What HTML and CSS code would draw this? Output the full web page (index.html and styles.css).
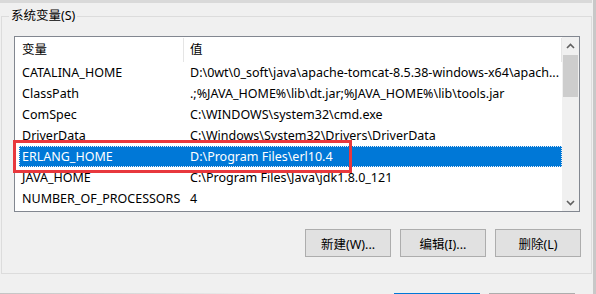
FILE: index.html
```html
<!DOCTYPE html>
<html lang="zh-CN">
<head>
<meta charset="utf-8">
<title>系统变量</title>
<link rel="stylesheet" href="styles.css">
</head>
<body>
<div class="window">
  <div class="topband"></div>
  <div class="group">
    <div class="group-label">系统变量(S)</div>
    <div class="listview">
      <div class="list-main">
        <div class="header">
          <div class="hcell">变量</div>
          <div class="hcell">值</div>
        </div>
        <div class="rows">
          <div class="row"><span class="c1">CATALINA_HOME</span><span class="c2">D:\0wt\0_soft\java\apache-tomcat-8.5.38-windows-x64\apach...</span></div>
          <div class="row"><span class="c1">ClassPath</span><span class="c2">.;%JAVA_HOME%\lib\dt.jar;%JAVA_HOME%\lib\tools.jar</span></div>
          <div class="row"><span class="c1">ComSpec</span><span class="c2">C:\WINDOWS\system32\cmd.exe</span></div>
          <div class="row"><span class="c1">DriverData</span><span class="c2">C:\Windows\System32\Drivers\DriverData</span></div>
          <div class="row selected"><span class="c1">ERLANG_HOME</span><span class="c2">D:\Program Files\erl10.4</span></div>
          <div class="row"><span class="c1">JAVA_HOME</span><span class="c2">C:\Program Files\Java\jdk1.8.0_121</span></div>
          <div class="row"><span class="c1">NUMBER_OF_PROCESSORS</span><span class="c2">4</span></div>
        </div>
      </div>
      <div class="scrollbar">
        <div class="arrow">
          <svg width="9" height="6" viewBox="0 0 9 6"><path d="M1 5 L4.5 1.5 L8 5" fill="none" stroke="#606060" stroke-width="1.6"/></svg>
        </div>
        <div class="track"><div class="thumb"></div></div>
        <div class="arrow">
          <svg width="9" height="6" viewBox="0 0 9 6"><path d="M1 1 L4.5 4.5 L8 1" fill="none" stroke="#606060" stroke-width="1.6"/></svg>
        </div>
      </div>
    </div>
    <div class="buttons">
      <button class="btn">新建(W)...</button>
      <button class="btn">编辑(I)...</button>
      <button class="btn">删除(L)</button>
    </div>
    <div class="highlight"></div>
  </div>
  <div class="footer">
    <div class="edge-left"></div>
    <div class="edge-ok"></div>
    <div class="edge-cancel"></div>
  </div>
</div>
</body>
</html>
```

FILE: styles.css
```css
* { box-sizing: border-box; }
html, body {
  margin: 0;
  padding: 0;
  width: 596px;
  height: 294px;
  overflow: hidden;
  background: #f0f0f0;
}
body {
  font-family: "Noto Sans", "Noto Sans CJK SC", sans-serif;
  font-size: 12.5px;
  color: #000;
}
.window {
  width: 596px;
  height: 294px;
  border-right: 3px solid #c8c8c8;
  display: flex;
  flex-direction: column;
}
.topband {
  height: 3px;
  width: 592px;
  background: #d9d9d9;
}
.group {
  position: relative;
  margin: 13px 0 0 1px;
  width: 591px;
  height: 258px;
  border: 1px solid #dcdcdc;
  padding: 19px 0 0 12px;
}
.group-label {
  position: absolute;
  left: 7px;
  top: -10px;
  padding: 0 2px;
  line-height: 18px;
  background: #f0f0f0;
}
.listview {
  width: 566px;
  height: 176px;
  border: 1px solid #828790;
  background: #fff;
  display: flex;
}
.list-main {
  flex: 1;
  display: flex;
  flex-direction: column;
  min-width: 0;
}
.header {
  height: 25px;
  display: grid;
  grid-template-columns: 169px 1fr;
}
.hcell {
  line-height: 24px;
  padding-left: 7px;
  border-right: 1px solid #e5e5e5;
  margin: 1px 0 0;
}
.hcell + .hcell { padding-left: 6px; }
.rows {
  display: flex;
  flex-direction: column;
}
.row {
  height: 21px;
  line-height: 21px;
  margin-left: 4px;
  display: grid;
  grid-template-columns: 165px 1fr;
  white-space: nowrap;
}
.c1 { padding-left: 3px; }
.c2 { padding-left: 6px; overflow: hidden; }
.row.selected {
  background: #0078d7;
  color: #fff;
  outline: 1px dotted #e8eef6;
  outline-offset: -1px;
}
.scrollbar {
  width: 17px;
  background: #f0f0f0;
  display: flex;
  flex-direction: column;
}
.arrow {
  height: 17px;
  display: flex;
  align-items: center;
  justify-content: center;
}
.track {
  flex: 1;
  padding: 1px 1px 0;
}
.thumb {
  height: 42px;
  background: #cdcdcd;
}
.buttons {
  display: flex;
  justify-content: flex-end;
  gap: 9px;
  width: 567px;
  margin-top: 17px;
}
.btn {
  width: 86px;
  height: 28px;
  font: inherit;
  color: #000;
  background: #e1e1e1;
  border: 1px solid #adadad;
  padding: 0;
}
.highlight {
  position: absolute;
  left: 11px;
  top: 123px;
  width: 339px;
  height: 33px;
  border: 3px solid #e8383d;
}
.footer {
  margin-top: auto;
  height: 1px;
  display: flex;
  width: 593px;
}
.edge-left {
  width: 394px;
  background: linear-gradient(to right, #c4c4c4, #f0f0f0 70%);
}
.edge-ok {
  width: 86px;
  background: #0078d7;
}
.edge-cancel {
  width: 86px;
  margin-left: 9px;
  background: #adadad;
}
```
